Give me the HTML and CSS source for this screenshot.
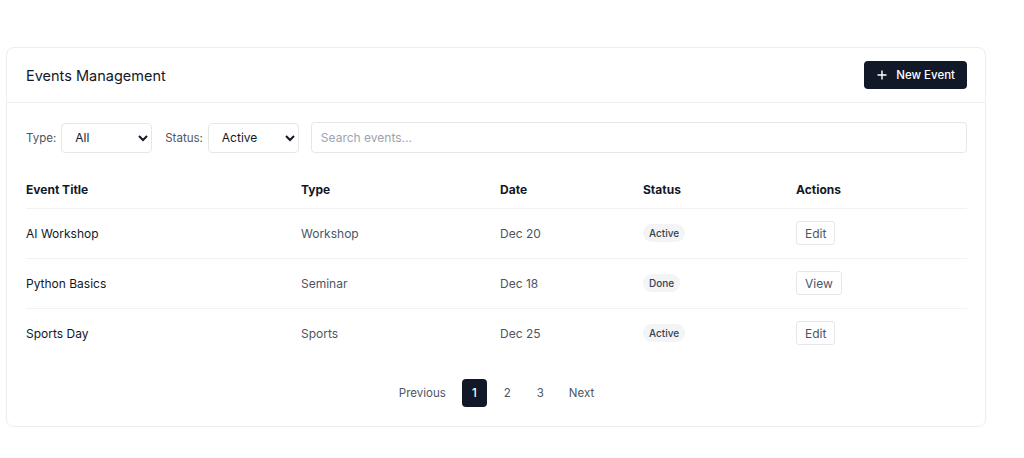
FILE: index.html
```html
<!DOCTYPE html>
<html lang="en">
<head>
<meta charset="utf-8">
<title>Events Management</title>
<link rel="stylesheet" href="styles.css">
</head>
<body>
<div class="page">
  <section class="card">
    <header class="card-header">
      <h1 class="title">Events Management</h1>
      <button class="btn-primary" type="button">
        <svg class="plus" width="10" height="10" viewBox="0 0 10 10" aria-hidden="true"><path d="M5 0.5v9M0.5 5h9" stroke="#fff" stroke-width="1.4" fill="none"/></svg>
        <span>New Event</span>
      </button>
    </header>
    <div class="card-body">
      <div class="filters">
        <label class="filter-label" for="type">Type:</label>
        <select id="type" class="select">
          <option>All</option>
          <option>Workshop</option>
          <option>Seminar</option>
          <option>Sports</option>
        </select>
        <label class="filter-label status-label" for="status">Status:</label>
        <select id="status" class="select">
          <option>Active</option>
          <option>Done</option>
        </select>
        <input class="search" type="text" placeholder="Search events...">
      </div>
      <table class="events">
        <colgroup>
          <col class="c1"><col class="c2"><col class="c3"><col class="c4"><col class="c5">
        </colgroup>
        <thead>
          <tr><th>Event Title</th><th>Type</th><th>Date</th><th>Status</th><th>Actions</th></tr>
        </thead>
        <tbody>
          <tr>
            <td class="name">AI Workshop</td><td class="muted">Workshop</td><td class="muted">Dec 20</td>
            <td><span class="badge">Active</span></td><td><button class="btn-outline" type="button">Edit</button></td>
          </tr>
          <tr>
            <td class="name">Python Basics</td><td class="muted">Seminar</td><td class="muted">Dec 18</td>
            <td><span class="badge">Done</span></td><td><button class="btn-outline" type="button">View</button></td>
          </tr>
          <tr>
            <td class="name">Sports Day</td><td class="muted">Sports</td><td class="muted">Dec 25</td>
            <td><span class="badge">Active</span></td><td><button class="btn-outline" type="button">Edit</button></td>
          </tr>
        </tbody>
      </table>
      <nav class="pagination">
        <button class="page-btn" type="button">Previous</button>
        <button class="page-btn current" type="button">1</button>
        <button class="page-btn" type="button">2</button>
        <button class="page-btn" type="button">3</button>
        <button class="page-btn" type="button">Next</button>
      </nav>
    </div>
  </section>
</div>
</body>
</html>
```

FILE: styles.css
```css
* { box-sizing: border-box; }

html, body {
  margin: 0;
  background: #ffffff;
  font-family: Inter, "Noto Sans", "Liberation Sans", sans-serif;
  color: #111827;
}

.page {
  padding: 47px 38px 0 6px;
}

.card {
  border: 1px solid #ebedf0;
  border-radius: 8px;
  background: #fff;
}

.card-header {
  display: flex;
  align-items: center;
  justify-content: space-between;
  padding: 13px 18px 13px 19px;
  border-bottom: 1px solid #eef0f2;
}

.title {
  margin: 0;
  font-size: 14.5px;
  font-weight: 400;
  color: #111827;
}

.btn-primary {
  display: flex;
  align-items: center;
  gap: 9px;
  height: 28px;
  padding: 0 12px 0 13px;
  border: none;
  border-radius: 4px;
  background: #111827;
  color: #fff;
  font-family: inherit;
  font-size: 11.5px;
  font-weight: 500;
}

.plus { display: block; }

.card-body {
  padding: 19px 18px 19px 19px;
}

.filters {
  display: flex;
  align-items: center;
  height: 31px;
}

.filter-label {
  font-size: 11.5px;
  color: #4b5563;
  margin-right: 5px;
}

.status-label { margin-left: 13px; }

.select {
  width: 91px;
  height: 30px;
  padding: 0 6px 0 9px;
  border: 1px solid #e5e7eb;
  border-radius: 4px;
  background: #fff;
  font-family: inherit;
  font-size: 12px;
  color: #111827;
}

.search {
  flex: 1;
  height: 31px;
  margin-left: 12px;
  padding: 0 9px;
  border: 1px solid #e5e7eb;
  border-radius: 4px;
  font-family: inherit;
  font-size: 12px;
  color: #111827;
}

.search::placeholder { color: #9ca3af; }

.events {
  width: 100%;
  margin-top: 19px;
  border-collapse: collapse;
  table-layout: fixed;
  font-size: 12px;
}

.c1 { width: 275px; }
.c2 { width: 199px; }
.c3 { width: 143px; }
.c4 { width: 153px; }

.events th {
  height: 36px;
  padding: 0 0 1px 0;
  text-align: left;
  font-weight: 700;
  color: #111827;
  border-bottom: 1px solid #f1f2f4;
}

.events td {
  height: 50px;
  padding: 0;
  border-bottom: 1px solid #f1f2f4;
}

.events tbody tr:last-child td { border-bottom: none; }

.name { color: #111827; }
.muted { color: #4b5563; }

.badge {
  display: inline-block;
  padding: 3px 6px;
  border-radius: 10px;
  background: #f3f4f6;
  font-size: 10px;
  font-weight: 500;
  color: #374151;
}

.btn-outline {
  height: 24px;
  padding: 0 8px;
  border: 1px solid #e5e7eb;
  border-radius: 3px;
  background: #fff;
  font-family: inherit;
  font-size: 12px;
  color: #4b5563;
}

.pagination {
  display: flex;
  justify-content: center;
  gap: 8px;
  margin-top: 21px;
}

.page-btn {
  min-width: 25px;
  height: 28px;
  padding: 0 8px;
  border: none;
  border-radius: 4px;
  background: transparent;
  font-family: inherit;
  font-size: 11.5px;
  color: #4b5563;
}

.page-btn.current {
  background: #111827;
  color: #fff;
  font-weight: 500;
}
```
